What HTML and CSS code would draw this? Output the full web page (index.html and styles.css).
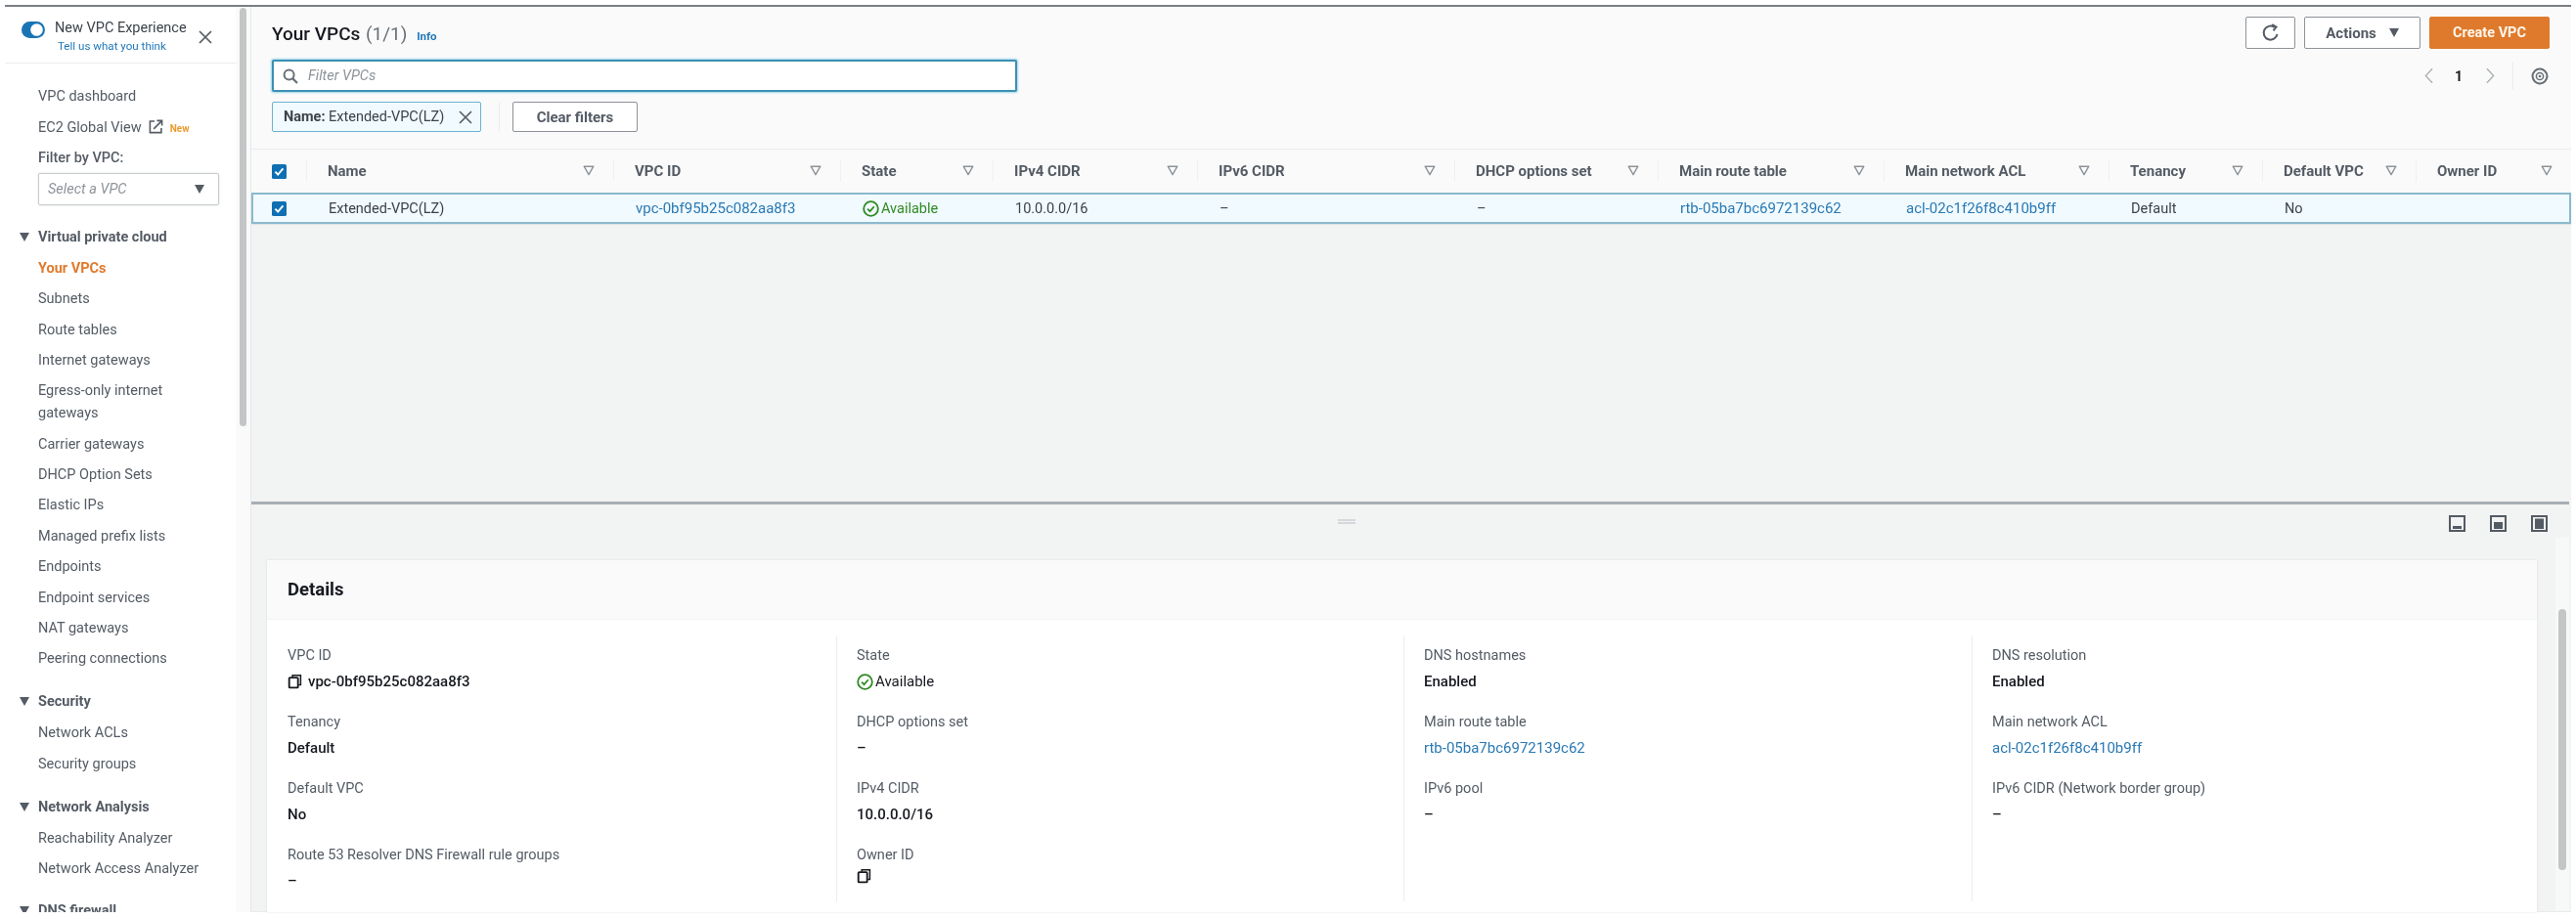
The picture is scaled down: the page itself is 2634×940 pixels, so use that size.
FILE: index.html
```html
<!DOCTYPE html>
<html lang="en">
<head>
<meta charset="utf-8">
<title>Your VPCs</title>
<link rel="stylesheet" href="styles.css">
</head>
<body>
<svg class="defs" width="0" height="0" aria-hidden="true">
  <symbol id="funnel" viewBox="0 0 12 11"><path d="M1.2 1.2h9.6L6 9.6z" fill="none" stroke="#8d9399" stroke-width="1.4" stroke-linejoin="round"/></symbol>
  <symbol id="check" viewBox="0 0 16 16"><rect width="16" height="16" rx="2" fill="#0f6fb3"/><path d="M3.6 8.2l3 3 5.6-6.6" fill="none" stroke="#fff" stroke-width="2"/></symbol>
  <symbol id="ok" viewBox="0 0 16 16"><circle cx="8" cy="8" r="6.9" fill="none" stroke="#2f8a22" stroke-width="1.7"/><path d="M4.8 8.2l2.3 2.3 4-4.6" fill="none" stroke="#2f8a22" stroke-width="1.6"/></symbol>
  <symbol id="copy" viewBox="0 0 16 16"><path d="M5.5 3.500V1.200h8.800v10.600h-2.200" fill="none" stroke="#16191f" stroke-width="1.6"/><rect x="1.800" y="3.800" width="9.600" height="11" rx="1" fill="none" stroke="#16191f" stroke-width="2"/></symbol>
</svg>

<div class="topline"></div>
<div class="app">
  <aside class="sidebar">
    <div class="side-head">
      <svg class="toggle" viewBox="0 0 24 17"><rect width="24" height="17" rx="8.5" fill="#1a74b4"/><circle cx="15.5" cy="8.5" r="6.300" fill="#fff"/></svg>
      <div class="exp">
        <div class="exp-title">New VPC Experience</div>
        <div class="exp-link">Tell us what you think</div>
      </div>
      <svg class="close" viewBox="0 0 14 14"><path d="M1 1l12 12M13 1L1 13" stroke="#545b64" stroke-width="1.7" fill="none"/></svg>
    </div>
    <nav class="nav">
      <a class="item">VPC dashboard</a>
      <a class="item">EC2 Global View
        <svg class="ext" viewBox="0 0 16 16"><path d="M6.500 2.200H1.500v12.300h12.300V9.600" fill="none" stroke="#545b64" stroke-width="1.7"/><path d="M5.500 10.500L14 2M9 1.500h5.500V7" fill="none" stroke="#545b64" stroke-width="1.7"/></svg>
        <span class="new">New</span></a>
      <div class="filter-label">Filter by VPC:</div>
      <div class="select"><span>Select a VPC</span><i class="caret"></i></div>

      <div class="sec sec-first"><i class="caret small"></i>Virtual private cloud</div>
      <a class="item active">Your VPCs</a>
      <a class="item">Subnets</a>
      <a class="item">Route tables</a>
      <a class="item">Internet gateways</a>
      <a class="item">Egress-only internet gateways</a>
      <a class="item">Carrier gateways</a>
      <a class="item">DHCP Option Sets</a>
      <a class="item">Elastic IPs</a>
      <a class="item">Managed prefix lists</a>
      <a class="item">Endpoints</a>
      <a class="item">Endpoint services</a>
      <a class="item">NAT gateways</a>
      <a class="item">Peering connections</a>

      <div class="sec"><i class="caret small"></i>Security</div>
      <a class="item">Network ACLs</a>
      <a class="item">Security groups</a>

      <div class="sec"><i class="caret small"></i>Network Analysis</div>
      <a class="item">Reachability Analyzer</a>
      <a class="item">Network Access Analyzer</a>

      <div class="sec sec-last"><i class="caret small"></i>DNS firewall</div>
    </nav>
  </aside>
  <div class="side-scroll"><div class="side-thumb"></div></div>

  <main class="main">
    <section class="upper">
      <div class="head">
        <div class="title-row">
          <h1 class="title">Your VPCs <span class="count">(1/1)</span> <a class="info">Info</a></h1>
          <div class="actions">
            <button class="btn btn-icon"><svg class="refresh" viewBox="0 0 20 20"><path d="M16.500 11a7 7 0 1 1-3-7.200" fill="none" stroke="#545b64" stroke-width="2"/><path d="M11.200 1.200l4.300 2.400-3 3.700" fill="none" stroke="#545b64" stroke-width="2"/></svg></button>
            <button class="btn btn-actions">Actions<i class="caret"></i></button>
            <button class="btn btn-primary">Create VPC</button>
          </div>
        </div>
        <div class="search-row">
          <div class="search">
            <svg class="mag" viewBox="0 0 16 16"><circle cx="6.600" cy="6.600" r="5" fill="none" stroke="#687078" stroke-width="2"/><path d="M10.400 10.400l4.600 4.600" stroke="#687078" stroke-width="2.200"/></svg>
            <span>Filter VPCs</span>
          </div>
          <div class="pager">
            <svg class="chev" viewBox="0 0 10 18"><path d="M9 1L1.500 9 9 17" fill="none" stroke="#aab0b5" stroke-width="1.500"/></svg>
            <b>1</b>
            <svg class="chev" viewBox="0 0 10 18"><path d="M1 1l7.500 8L1 17" fill="none" stroke="#aab0b5" stroke-width="1.500"/></svg>
            <span class="pager-sep"></span>
            <svg class="gear" viewBox="0 0 18 18"><circle cx="9" cy="9" r="7.400" fill="none" stroke="#687078" stroke-width="2"/><circle cx="9" cy="9" r="7.800" fill="none" stroke="#687078" stroke-width="1" stroke-dasharray="2 4.100"/><circle cx="9" cy="9" r="3.600" fill="none" stroke="#687078" stroke-width="1.500"/><circle cx="9" cy="9" r="1.300" fill="#687078"/></svg>
          </div>
        </div>
        <div class="token-row">
          <div class="token"><span><b>Name:</b> Extended-VPC(LZ)</span>
            <svg class="token-x" viewBox="0 0 14 14"><path d="M1 1l12 12M13 1L1 13" stroke="#545b64" stroke-width="1.600" fill="none"/></svg>
          </div>
          <span class="token-sep"></span>
          <button class="btn btn-clear">Clear filters</button>
        </div>
      </div>

      <div class="tbl tbl-head">
        <div class="th th-check"><svg class="cb"><use href="#check"/></svg></div>
        <div class="th"><span>Name</span><svg class="fn"><use href="#funnel"/></svg></div>
        <div class="th"><span>VPC ID</span><svg class="fn"><use href="#funnel"/></svg></div>
        <div class="th"><span>State</span><svg class="fn"><use href="#funnel"/></svg></div>
        <div class="th"><span>IPv4 CIDR</span><svg class="fn"><use href="#funnel"/></svg></div>
        <div class="th"><span>IPv6 CIDR</span><svg class="fn"><use href="#funnel"/></svg></div>
        <div class="th"><span>DHCP options set</span><svg class="fn"><use href="#funnel"/></svg></div>
        <div class="th"><span>Main route table</span><svg class="fn"><use href="#funnel"/></svg></div>
        <div class="th"><span>Main network ACL</span><svg class="fn"><use href="#funnel"/></svg></div>
        <div class="th"><span>Tenancy</span><svg class="fn"><use href="#funnel"/></svg></div>
        <div class="th"><span>Default VPC</span><svg class="fn"><use href="#funnel"/></svg></div>
        <div class="th"><span>Owner ID</span><svg class="fn"><use href="#funnel"/></svg></div>
      </div>
      <div class="tbl tbl-row">
        <div class="td td-check"><svg class="cb"><use href="#check"/></svg></div>
        <div class="td">Extended-VPC(LZ)</div>
        <div class="td"><a class="link">vpc-0bf95b25c082aa8f3</a></div>
        <div class="td status"><svg class="ok"><use href="#ok"/></svg>Available</div>
        <div class="td">10.0.0.0/16</div>
        <div class="td">–</div>
        <div class="td">–</div>
        <div class="td"><a class="link">rtb-05ba7bc6972139c62</a></div>
        <div class="td"><a class="link">acl-02c1f26f8c410b9ff</a></div>
        <div class="td">Default</div>
        <div class="td">No</div>
        <div class="td"></div>
      </div>
    </section>

    <div class="splitter"></div>

    <section class="lower">
      <div class="toolbar">
        <span class="handle"></span>
        <div class="panel-icons">
          <svg class="pi" viewBox="0 0 17 17"><rect x="1" y="1" width="15" height="15" fill="none" stroke="#545b64" stroke-width="2"/><rect x="4" y="11" width="9" height="3" fill="#545b64"/></svg>
          <svg class="pi" viewBox="0 0 17 17"><rect x="1" y="1" width="15" height="15" fill="none" stroke="#545b64" stroke-width="2"/><rect x="4" y="7" width="9" height="7" fill="#545b64"/></svg>
          <svg class="pi" viewBox="0 0 17 17"><rect x="1" y="1" width="15" height="15" fill="none" stroke="#545b64" stroke-width="2"/><rect x="4" y="3.500" width="9" height="10.500" fill="#545b64"/></svg>
        </div>
      </div>
      <div class="card">
        <h2 class="card-title">Details</h2>
        <div class="card-body">
          <div class="col">
            <div class="kv"><div class="k">VPC ID</div><div class="v"><svg class="cp"><use href="#copy"/></svg>vpc-0bf95b25c082aa8f3</div></div>
            <div class="kv"><div class="k">Tenancy</div><div class="v">Default</div></div>
            <div class="kv"><div class="k">Default VPC</div><div class="v">No</div></div>
            <div class="kv"><div class="k">Route 53 Resolver DNS Firewall rule groups</div><div class="v">–</div></div>
          </div>
          <div class="col">
            <div class="kv"><div class="k">State</div><div class="v status"><svg class="ok"><use href="#ok"/></svg>Available</div></div>
            <div class="kv"><div class="k">DHCP options set</div><div class="v">–</div></div>
            <div class="kv"><div class="k">IPv4 CIDR</div><div class="v">10.0.0.0/16</div></div>
            <div class="kv"><div class="k">Owner ID</div><div class="v"><svg class="cp"><use href="#copy"/></svg></div></div>
          </div>
          <div class="col">
            <div class="kv"><div class="k">DNS hostnames</div><div class="v">Enabled</div></div>
            <div class="kv"><div class="k">Main route table</div><div class="v"><a class="link">rtb-05ba7bc6972139c62</a></div></div>
            <div class="kv"><div class="k">IPv6 pool</div><div class="v">–</div></div>
          </div>
          <div class="col">
            <div class="kv"><div class="k">DNS resolution</div><div class="v">Enabled</div></div>
            <div class="kv"><div class="k">Main network ACL</div><div class="v"><a class="link">acl-02c1f26f8c410b9ff</a></div></div>
            <div class="kv"><div class="k">IPv6 CIDR (Network border group)</div><div class="v">–</div></div>
          </div>
        </div>
      </div>
      <div class="lower-scroll"><div class="lower-thumb"></div></div>
    </section>
  </main>
</div>
</body>
</html>
```

FILE: styles.css
```css
* { box-sizing: border-box; }
html, body { margin: 0; height: 940px; overflow: hidden; background: #fff; }
body {
  font-family: "Roboto", "Liberation Sans", sans-serif;
  font-size: 14.5px;
  color: #16191f;
  padding-right: 5px;
  filter: blur(0.45px);
}
.defs { position: absolute; }
h1, h2 { margin: 0; }
button { font: inherit; }

.topline { height: 2px; margin: 5px 0 0 5px; background: #7b7f83; }
.app { display: flex; height: 926px; }

/* sidebar */
.sidebar { width: 241px; flex: none; overflow: hidden; background: #fff; color: #545b64; }
.side-head { height: 58px; margin-left: 5px; border-bottom: 1px solid #eaeded; display: flex; padding: 15px 0 0 17px; }
.toggle { width: 24px; height: 17px; flex: none; }
.exp { width: 146px; margin-left: 10px; }
.exp-title { font-size: 14.5px; line-height: 16px; color: #3d434b; margin-top: -1px; white-space: nowrap; }
.exp-link { font-size: 11.6px; line-height: 14px; color: #1f78b8; margin: 3px 0 0 3px; white-space: nowrap; }
.close { width: 14px; height: 14px; margin: 9px 0 0 1px; flex: none; }

.nav { padding: 18px 14px 0 39px; }
.item { display: block; padding: 4.2px 0; line-height: 23px; }
.item.active { color: #e07b2d; font-weight: 700; }
.ext { width: 15px; height: 15px; margin: 0 3px 0 4px; vertical-align: -2px; }
.new { font-size: 10px; font-weight: 700; color: #ec9b2f; }
.filter-label { line-height: 23px; font-weight: 500; margin-top: 3px; }
.select { height: 33px; margin-top: 4px; width: 185px; border: 1px solid #c6cbcf; border-radius: 2px; box-shadow: 0 0 2px #d5d8da; display: flex; align-items: center; justify-content: space-between; padding: 0 14px 0 9px; font-style: italic; color: #8d9399; }
.caret { display: inline-block; width: 0; height: 0; border-left: 5px solid transparent; border-right: 5px solid transparent; border-top: 9px solid #545b64; }
.caret.small { position: absolute; left: -19px; top: 7px; }
.sec { position: relative; font-weight: 700; line-height: 23px; margin-top: 17px; color: #545b64; }
.sec-first { margin-top: 21px; }
.sec-last { margin-top: 15px; }
.sec + .item { padding-top: 9px; }

.side-scroll { width: 16px; flex: none; background: #fafafa; border-right: 1px solid #e6e8e9; padding: 1px 4px 0; }
.side-thumb { width: 7px; height: 428px; background: #c4c5c6; border-radius: 4px; }

/* main */
.main { flex: 1; min-width: 0; display: flex; flex-direction: column; background: #f2f3f3; border-bottom: 1px solid #e9ebeb; }
.upper { height: 506px; }
.head { height: 145px; background: #fafafa; padding: 10px 22px 0 21px; }
.title-row { display: flex; justify-content: space-between; align-items: center; height: 33px; }
.title { font-size: 19px; line-height: 33px; font-weight: 500; position: relative; top: 2px; }
.count { font-weight: 400; color: #687078; margin-left: 1px; }
.info { font-size: 11.5px; font-weight: 700; color: #1f78b8; margin-left: 5px; }
.actions { display: flex; gap: 9px; }
.btn { height: 33px; background: #fff; border: 1.5px solid #8d9398; border-radius: 2px; font-size: 15px; font-weight: 700; color: #545b64; padding: 0; }
.btn-icon { width: 51px; display: flex; align-items: center; justify-content: center; }
.refresh { width: 20px; height: 20px; }
.btn-actions { width: 119px; display: flex; align-items: center; justify-content: center; gap: 13px; }
.btn-primary { width: 123px; background: #df7a2c; border-color: #df7a2c; color: #fff6ec; font-size: 14.5px; }
.search-row { display: flex; justify-content: space-between; align-items: center; height: 33px; margin-top: 11px; }
.search { width: 762px; height: 33px; background: #fff; border: 2px solid #3f8fb3; border-radius: 2px; box-shadow: 0 0 2px 1px #9ed8ea; display: flex; align-items: center; padding-left: 9px; font-style: italic; color: #8d9399; }
.mag { width: 16px; height: 16px; margin-right: 10px; }
.pager { display: flex; align-items: center; }
.chev { width: 9px; height: 17px; }
.pager b { margin: 0 24px 0 22px; font-size: 14px; color: #16191f; }
.pager-sep { width: 1px; height: 29px; background: #eaeded; margin: 0 18px 0 18px; }
.gear { width: 18px; height: 18px; margin-right: 1px; }
.token-row { display: flex; align-items: center; height: 31px; margin-top: 10px; }
.token { width: 214px; height: 31px; background: #f1faff; border: 1px solid #6bb3d0; border-radius: 2px; display: flex; align-items: center; justify-content: space-between; padding: 0 8px 0 11px; white-space: nowrap; color: #3d434b; }
.token-x { width: 14px; height: 14px; }
.token-sep { width: 1px; height: 29px; background: #eaeded; margin: 0 13px 0 18px; }
.btn-clear { width: 128px; height: 31px; }

.tbl { display: grid; grid-template-columns: 56px 314px 232px 156px 209px 263px 208px 231px 230px 157px 157px 1fr; }
.tbl-head { height: 45px; background: #fafafa; border-top: 1px solid #eaeded; color: #545b64; font-weight: 700; font-size: 15px; }
.th { display: flex; align-items: center; justify-content: space-between; padding: 0 19px 0 22px; position: relative; white-space: nowrap; }
.th + .th::before { content: ""; position: absolute; left: 0; top: 11px; bottom: 11px; width: 1px; background: #eff0f1; }
.th-check, .td-check { padding: 0 0 0 21px; justify-content: flex-start; }
.fn { width: 12px; height: 11px; margin-top: -2px; }
.cb { width: 15px; height: 15px; display: block; }
.tbl-row { height: 32px; background: #f1faff; border: 2px solid #8bb9cd; box-shadow: 0 1px 1px #dfe3e4; }
.td { display: flex; align-items: center; padding-left: 21px; white-space: nowrap; color: #3d434b; }
.td-check { padding-left: 19px; }
.link { color: #2a79b3; font-size: 15px; }
.status, .td.status { color: #2f8a22; }
.ok { width: 17px; height: 17px; margin-right: 2px; flex: none; }

.splitter { height: 3px; background: #a9afb4; flex: none; margin-right: 2px; }
.lower { flex: 1; min-height: 0; position: relative; padding-left: 16px; }
.toolbar { height: 57px; display: flex; padding: 11px 24px 0 1095px; margin-left: 0; }
.handle { width: 18px; height: 5px; margin-top: 4px; border-top: 2px solid #d5d8da; border-bottom: 2px solid #d5d8da; }
.panel-icons { margin-left: auto; display: flex; gap: 25px; }
.pi { width: 17px; height: 17px; }

.card { width: 2321px; height: 360px; background: #fff; overflow: hidden; box-shadow: 0 0 2px #dadcdd; }
.card-title { height: 61px; background: #fafafa; font-size: 18.5px; line-height: 60px; font-weight: 700; padding-left: 21px; border-bottom: 1px solid #f2f3f3; }
.card-body { display: grid; grid-template-columns: 582px 580px 581px 1fr; padding-top: 16px; }
.col { height: 272px; padding: 8px 0 0 21px; }
.col + .col { border-left: 1px solid #eceeef; padding-left: 20px; }
.kv { height: 68px; }
.k { line-height: 26px; color: #545b64; white-space: nowrap; }
.v { line-height: 26px; font-size: 15px; font-weight: 500; color: #16191f; display: flex; align-items: center; white-space: nowrap; }
.v .link { font-weight: 400; }
.v.status { font-weight: 400; }
.cp { width: 15px; height: 16px; margin-right: 6px; }

.lower-scroll { position: absolute; right: 2px; top: 34px; bottom: 0; width: 14px; background: #f7f8f8; padding: 73px 3px 0; }
.lower-thumb { width: 8px; height: 267px; background: #c4c5c6; border-radius: 4px; }
```
